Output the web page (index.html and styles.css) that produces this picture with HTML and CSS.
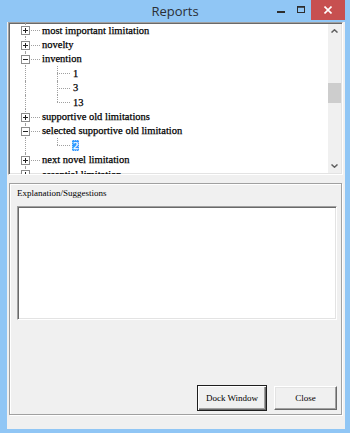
FILE: index.html
```html
<!DOCTYPE html>
<html>
<head>
<meta charset="utf-8">
<link rel="stylesheet" href="styles.css">
</head>
<body>
<div class="window">
  <div class="titlebar">
    <span></span>
    <span class="title">Reports</span>
    <div class="ctrls">
      <span class="cbtn min"><svg width="8" height="2" viewBox="0 0 8 2"><rect width="8" height="2" fill="#2d2d2d"/></svg></span>
      <span class="cbtn max"><svg width="8" height="7" viewBox="0 0 8 7"><rect x="0.5" y="1" width="7" height="5.5" fill="none" stroke="#2d2d2d"/><rect x="0" y="0" width="8" height="1.5" fill="#2d2d2d"/></svg></span>
      <span class="cbtn close"><svg width="8" height="8" viewBox="0 0 8 8"><path d="M0.5 0.5L7.5 7.5M7.5 0.5L0.5 7.5" stroke="#fff" stroke-width="1.6"/></svg></span>
    </div>
  </div>
  <div class="client">
    <div class="tree">
      <div class="items">
        <div class="row"><span class="c tee"><svg class="exp" viewBox="0 0 9 9"><rect x=".5" y=".5" width="8" height="8" fill="#fff" stroke="#8c8c8c"/><path d="M2 4.5h5M4.5 2v5" stroke="#222"/></svg></span><span class="lbl">most important limitation</span></div>
        <div class="row"><span class="c tee"><svg class="exp" viewBox="0 0 9 9"><rect x=".5" y=".5" width="8" height="8" fill="#fff" stroke="#8c8c8c"/><path d="M2 4.5h5M4.5 2v5" stroke="#222"/></svg></span><span class="lbl">novelty</span></div>
        <div class="row"><span class="c tee"><svg class="exp" viewBox="0 0 9 9"><rect x=".5" y=".5" width="8" height="8" fill="#fff" stroke="#8c8c8c"/><path d="M2 4.5h5" stroke="#222"/></svg></span><span class="lbl">invention</span></div>
        <div class="row"><span class="c pass"></span><span class="c c2 tee"></span><span class="lbl">1</span></div>
        <div class="row"><span class="c pass"></span><span class="c c2 tee"></span><span class="lbl">3</span></div>
        <div class="row"><span class="c pass"></span><span class="c c2 end"></span><span class="lbl">13</span></div>
        <div class="row"><span class="c tee"><svg class="exp" viewBox="0 0 9 9"><rect x=".5" y=".5" width="8" height="8" fill="#fff" stroke="#8c8c8c"/><path d="M2 4.5h5M4.5 2v5" stroke="#222"/></svg></span><span class="lbl">supportive old limitations</span></div>
        <div class="row"><span class="c tee"><svg class="exp" viewBox="0 0 9 9"><rect x=".5" y=".5" width="8" height="8" fill="#fff" stroke="#8c8c8c"/><path d="M2 4.5h5" stroke="#222"/></svg></span><span class="lbl">selected supportive old limitation</span></div>
        <div class="row"><span class="c pass"></span><span class="c c2 end"></span><span class="lbl sel">2</span></div>
        <div class="row"><span class="c tee"><svg class="exp" viewBox="0 0 9 9"><rect x=".5" y=".5" width="8" height="8" fill="#fff" stroke="#8c8c8c"/><path d="M2 4.5h5M4.5 2v5" stroke="#222"/></svg></span><span class="lbl">next novel limitation</span></div>
        <div class="row"><span class="c tee"><svg class="exp" viewBox="0 0 9 9"><rect x=".5" y=".5" width="8" height="8" fill="#fff" stroke="#8c8c8c"/><path d="M2 4.5h5M4.5 2v5" stroke="#222"/></svg></span><span class="lbl">essential limitation</span></div>
      </div>
      <div class="vscroll">
        <span class="arrow"><svg width="7" height="4" viewBox="0 0 7 4"><path d="M0.5 3.5L3.5 0.8L6.5 3.5" fill="none" stroke="#606060" stroke-width="1.5"/></svg></span>
        <div class="track"><div class="thumb"></div></div>
        <span class="arrow"><svg width="7" height="4" viewBox="0 0 7 4"><path d="M0.5 0.5L3.5 3.2L6.5 0.5" fill="none" stroke="#606060" stroke-width="1.5"/></svg></span>
      </div>
    </div>
    <div class="group">
      <div class="group-label">Explanation/Suggestions</div>
      <div class="textbox"></div>
      <div class="buttons">
        <button class="btn default">Dock Window</button>
        <button class="btn close-btn">Close</button>
      </div>
    </div>
  </div>
</div>
</body>
</html>
```

FILE: styles.css
```css
* { box-sizing: border-box; }
html, body { margin: 0; padding: 0; }
body {
  width: 350px;
  height: 433px;
  overflow: hidden;
  background: #90c6f5;
}
.window {
  width: 350px;
  height: 433px;
  display: flex;
  flex-direction: column;
}
.titlebar {
  height: 22px;
  display: grid;
  grid-template-columns: 1fr auto 1fr;
  align-items: center;
}
.title {
  font-family: "Open Sans", "Noto Sans", sans-serif;
  font-size: 13px;
  color: #2b2f36;
  line-height: 22px;
}
.ctrls {
  justify-self: end;
  display: flex;
  align-items: flex-start;
  height: 22px;
  margin-right: 5px;
}
.cbtn {
  display: flex;
  align-items: center;
  justify-content: center;
  height: 20px;
}
.cbtn svg { display: block; }
.min { width: 21px; padding-top: 4px; }
.max { width: 20px; padding-bottom: 2px; }
.close { width: 34px; background: #c75050; }
.client {
  margin: 0 5px 4px 7px;
  flex: 1;
  background: #f0f0f0;
  display: flex;
  flex-direction: column;
}
.tree {
  margin-left: 1px;
  width: 335px;
  height: 153px;
  background: #fff;
  border: 1px solid;
  border-color: #a0a0a0 #fff #fff #a0a0a0;
  box-shadow: inset 1px 1px 0 #696969, inset -1px -1px 0 #e3e3e3;
  display: flex;
  overflow: hidden;
}
.items {
  flex: 1;
  overflow: hidden;
  font-family: "Liberation Serif", "Times New Roman", serif;
  font-size: 10.5px;
  color: #000;
  -webkit-text-stroke: 0.25px #000;
}
.row {
  height: 14.4px;
  display: flex;
  align-items: center;
  white-space: nowrap;
}
.c {
  position: relative;
  width: 32px;
  height: 100%;
  flex: none;
}
.c.c2 { width: 31px; }
.c::before, .c::after {
  content: "";
  position: absolute;
  left: 16px;
}
.c::before {
  top: 0;
  bottom: 0;
  border-left: 1px dotted #a0a0a0;
}
.c.end::before { bottom: 50%; }
.c.tee::after, .c.end::after {
  top: 50%;
  right: 1px;
  border-top: 1px dotted #a0a0a0;
}
.c.c2.tee::after, .c.c2.end::after { right: 2px; }
.exp {
  position: absolute;
  left: 12px;
  top: calc(50% - 4px);
  width: 9px;
  height: 9px;
  z-index: 1;
  display: block;
}
.lbl {
  padding: 0 1px;
  line-height: 11px;
  height: 11px;
}
.lbl.sel {
  background: #3399ff;
  color: #fff;
  -webkit-text-stroke: 0.25px #fff;
  outline: 1px dotted #9cccff;
  outline-offset: -1px;
}
.vscroll {
  width: 13px;
  margin-right: 1px;
  margin-top: 1px;
  margin-bottom: 1px;
  background: #f0f0f0;
  display: flex;
  flex-direction: column;
}
.arrow {
  height: 14px;
  display: flex;
  align-items: center;
  justify-content: center;
}
.arrow svg { display: block; }
.track { flex: 1; }
.thumb {
  margin-top: 45px;
  height: 20px;
  background: #cdcdcd;
}
.group {
  margin: 8px 0 0 2px;
  width: 333px;
  height: 232px;
  border: 1px solid #a0a0a0;
  box-shadow: inset 1px 1px 0 #fff, 1px 1px 0 #fff;
  display: flex;
  flex-direction: column;
  padding: 3px 4px 3px 7px;
}
.group-label {
  font-family: "Liberation Serif", "Times New Roman", serif;
  font-size: 9px;
  line-height: 12px;
  color: #000;
}
.textbox {
  margin-top: 7px;
  width: 320px;
  height: 114px;
  background: #fff;
  border: 1px solid;
  border-color: #a0a0a0 #fff #fff #a0a0a0;
  box-shadow: inset 1px 1px 0 #696969, inset -1px -1px 0 #e3e3e3;
}
.buttons {
  margin-top: auto;
  display: flex;
  justify-content: flex-end;
  align-items: center;
  gap: 7px;
}
.btn {
  font-family: "Liberation Serif", "Times New Roman", serif;
  font-size: 9px;
  color: #000;
  background: #f0f0f0;
  padding: 0;
  margin: 0;
  border: 1px solid;
  border-color: #fff #696969 #696969 #fff;
  box-shadow: inset -1px -1px 0 #a0a0a0, inset 1px 1px 0 #e3e3e3;
  width: 63px;
  height: 24px;
}
.btn.default {
  width: 70px;
  height: 26px;
  border: 1px solid #1e1e1e;
  box-shadow: inset 1px 1px 0 #fff, inset -1px -1px 0 #696969, inset -2px -2px 0 #a0a0a0;
}
```
